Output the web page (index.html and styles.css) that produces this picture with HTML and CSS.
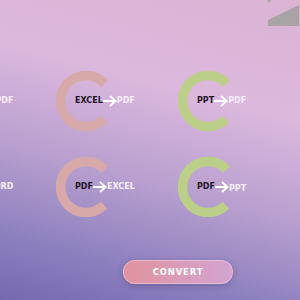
FILE: index.html
```html
<!DOCTYPE html>
<html>
<head>
<meta charset="utf-8">
<link rel="stylesheet" href="styles.css">
</head>
<body>
<svg class="corner" width="32" height="26" viewBox="0 0 32 26">
  <polygon points="0,0 4,0 0,3" fill="#a8a4a6"/>
  <polygon points="0,20 31,5 31,26 0,26" fill="#a8a4a6"/>
</svg>
<main class="page">
  <div class="grid">
    <div class="cell">
      <svg class="ring" viewBox="0 0 60 60"><circle cx="30" cy="30" r="25.5" class="arc green"/></svg>
      <div class="label"><span class="from">WORD</span><svg class="arrow" viewBox="0 0 14 12"><path d="M0 6H12.5M7 1L12.5 6L7 11"/></svg><span class="to">PDF</span></div>
    </div>
    <div class="cell">
      <svg class="ring" viewBox="0 0 60 60"><circle cx="30" cy="30" r="25.5" class="arc pink"/></svg>
      <div class="label"><span class="from">EXCEL</span><svg class="arrow" viewBox="0 0 14 12"><path d="M0 6H12.5M7 1L12.5 6L7 11"/></svg><span class="to">PDF</span></div>
    </div>
    <div class="cell">
      <svg class="ring" viewBox="0 0 60 60"><circle cx="30" cy="30" r="25.5" class="arc green"/></svg>
      <div class="label"><span class="from">PPT</span><svg class="arrow" viewBox="0 0 14 12"><path d="M0 6H12.5M7 1L12.5 6L7 11"/></svg><span class="to">PDF</span></div>
    </div>
    <div class="cell">
      <svg class="ring" viewBox="0 0 60 60"><circle cx="30" cy="30" r="25.5" class="arc green"/></svg>
      <div class="label"><span class="from">PDF</span><svg class="arrow" viewBox="0 0 14 12"><path d="M0 6H12.5M7 1L12.5 6L7 11"/></svg><span class="to">WORD</span></div>
    </div>
    <div class="cell">
      <svg class="ring" viewBox="0 0 60 60"><circle cx="30" cy="30" r="25.5" class="arc pink"/></svg>
      <div class="label"><span class="from">PDF</span><svg class="arrow" viewBox="0 0 14 12"><path d="M0 6H12.5M7 1L12.5 6L7 11"/></svg><span class="to">EXCEL</span></div>
    </div>
    <div class="cell">
      <svg class="ring" viewBox="0 0 60 60"><circle cx="30" cy="30" r="25.5" class="arc green"/></svg>
      <div class="label"><span class="from">PDF</span><svg class="arrow" viewBox="0 0 14 12"><path d="M0 6H12.5M7 1L12.5 6L7 11"/></svg><span class="to low">PPT</span></div>
    </div>
  </div>
  <button class="convert">CONVERT</button>
</main>
</body>
</html>
```
FILE: styles.css
```css
html, body {
  margin: 0;
  padding: 0;
  width: 300px;
  height: 300px;
  overflow: hidden;
}
body {
  position: relative;
  font-family: "DejaVu Sans", sans-serif;
  background: linear-gradient(195deg, #dbb4d4 0%, #dcb8de 32%, #b9a0cf 58%, #8e80bf 82%, #7768b0 100%);
}
.corner {
  position: absolute;
  top: 0;
  right: 0;
}
.page {
  display: flex;
  flex-direction: column;
  padding-top: 71px;
}
.grid {
  display: grid;
  grid-template-columns: repeat(3, 122px);
  row-gap: 26px;
  margin-left: -66px;
}
.cell {
  display: grid;
  width: 60px;
  height: 60px;
}
.ring, .label {
  grid-area: 1 / 1;
}
.ring {
  width: 60px;
  height: 60px;
}
.arc {
  fill: none;
  stroke-width: 9.5;
  stroke-dasharray: 120.2 40;
  stroke-dashoffset: -20;
}
.pink { stroke: #d7a9a9; }
.green { stroke: #bccf89; }
.label {
  display: flex;
  align-items: center;
  margin-left: 19px;
  white-space: nowrap;
  font-size: 8px;
  font-weight: bold;
  line-height: 1;
  z-index: 1;
}
.from { color: #1e1526; }
.to { color: #f6eef8; }
.to.low { position: relative; top: 2px; }
.arrow {
  width: 14px;
  height: 12px;
  flex: none;
}
.arrow path {
  fill: none;
  stroke: #ffffff;
  stroke-width: 2;
}
.convert {
  align-self: flex-start;
  margin: 43px 0 0 123px;
  width: 110px;
  height: 24px;
  border-radius: 12px;
  border: 1px solid rgba(255, 255, 255, 0.35);
  background: linear-gradient(90deg, #e1939e, #d2a4d2);
  box-shadow: 0 2px 6px rgba(60, 40, 90, 0.3);
  color: #ffffff;
  font-family: "DejaVu Sans", sans-serif;
  font-weight: bold;
  font-size: 8.5px;
  letter-spacing: 0.8px;
  padding: 0;
}
```
